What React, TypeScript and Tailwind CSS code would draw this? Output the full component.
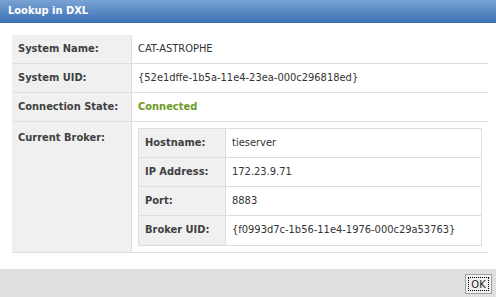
const Row = ({ label, children, last }: { label: string; children: React.ReactNode; last?: boolean }) => (
  <div className={`flex border-b border-[#dedede] ${last ? 'flex-1' : 'h-[29px]'}`}>
    <div className={`w-[120px] shrink-0 bg-[#f0f0f0] border-r border-[#dedede] pl-[6px] font-bold text-[#404040] ${last ? 'pt-[8px]' : 'flex items-center'}`}>
      {label}
    </div>
    <div className={`flex-1 pl-[6px] ${last ? 'pt-[6px] pr-[6px] pb-[6px]' : 'flex items-center'}`}>{children}</div>
  </div>
);

const SubRow = ({ label, value, last }: { label: string; value: string; last?: boolean }) => (
  <div className={`flex h-[29px] ${last ? '' : 'border-b border-[#dedede]'}`}>
    <div className="w-[87px] shrink-0 bg-[#f0f0f0] border-r border-[#dedede] pl-[6px] flex items-center font-bold text-[#404040]">
      {label}
    </div>
    <div className="flex-1 pl-[6px] flex items-center">{value}</div>
  </div>
);

export default function App() {
  return (
    <div
      className="w-[496px] h-[297px] flex flex-col bg-white text-[11px] text-[#333]"
      style={{ fontFamily: '"DejaVu Sans Condensed", "DejaVu Sans", sans-serif' }}
    >
      {/* Title bar */}
      <div className="h-[23px] shrink-0 bg-gradient-to-b from-[#7aa3d4] to-[#3a70b2] flex items-center px-[8px] text-white font-bold">
        Lookup in DXL
      </div>

      {/* Body */}
      <div className="flex-1 pt-[12px] pl-[12px] pr-[8px] pb-[16px] flex flex-col">
        <div className="flex-1 flex flex-col">
          <Row label="System Name:">CAT-ASTROPHE</Row>
          <Row label="System UID:">{'{52e1dffe-1b5a-11e4-23ea-000c296818ed}'}</Row>
          <Row label="Connection State:">
            <span className="font-bold text-[#6f9a25]">Connected</span>
          </Row>
          <Row label="Current Broker:" last>
            <div className="border border-[#dedede] w-[344px]">
              <SubRow label="Hostname:" value="tieserver" />
              <SubRow label="IP Address:" value="172.23.9.71" />
              <SubRow label="Port:" value="8883" />
              <SubRow label="Broker UID:" value="{f0993d7c-1b56-11e4-1976-000c29a53763}" last />
            </div>
          </Row>
        </div>
      </div>

      {/* Footer */}
      <div className="h-[30px] shrink-0 bg-[#dfdfdf] flex items-center justify-end pr-[4px]">
        <button className="w-[27px] h-[20px] border border-[#a0a0a0] bg-[#f0f0f0] p-[2px] text-[#222]">
          <span className="block w-full h-full border border-dotted border-black leading-[13px]">OK</span>
        </button>
      </div>
    </div>
  );
}
